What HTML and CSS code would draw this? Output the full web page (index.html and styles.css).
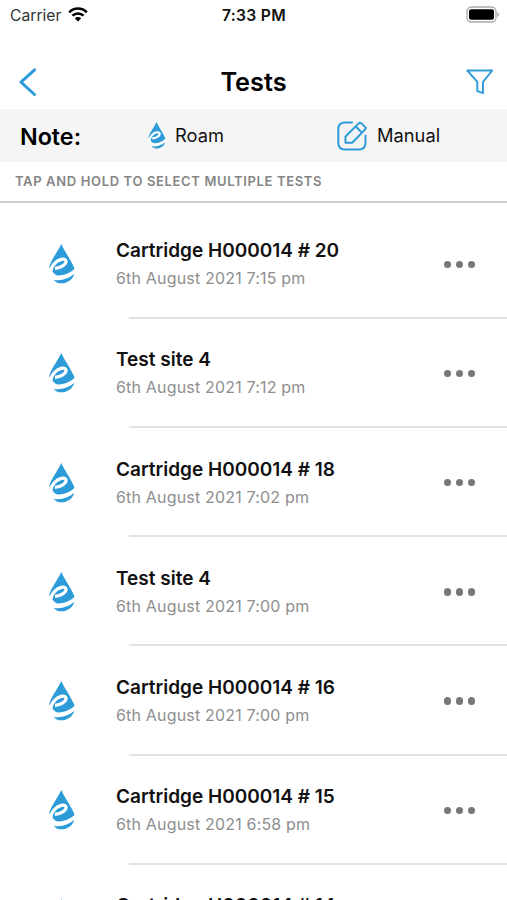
FILE: index.html
```html
<!DOCTYPE html>
<html lang="en">
<head>
  <meta charset="UTF-8" />
  <meta name="viewport" content="width=device-width, initial-scale=1.0"/>
  <title>Tests</title>
  <link rel="stylesheet" href="styles.css">
</head>
<body>
  <svg class="symbols" width="0" height="0">
    <symbol id="drop" viewBox="0 0 78 120">
      <path class="blue" d="M37 0 C45 20 64 44 76 72 C78 84 54 102 30 101 L8 82 L1 70 C4 50 26 24 37 0 Z"/>
      <path class="swirl" d="M18 73 C34 73 53 61 51 51 C47 41 29 46 17 58 C1 76 1 97 26 99 C46 100 64 92 82 77"/>
      <path class="blue" d="M14 107 C34 112 58 105 76 90 C71 107 55 118 37 118 C27 118 19 114 14 107 Z"/>
    </symbol>
  </svg>

  <div class="status-bar">
    <div class="carrier">
      <span>Carrier</span>
      <svg class="wifi" viewBox="0 0 20 15">
        <path d="M1.2 5.3 C6.2 .3 13.8 .3 18.8 5.3"/>
        <path d="M4.4 8.7 C7.6 5.6 12.4 5.6 15.6 8.7"/>
        <path class="dot" d="M6.8 11.2 C8.6 9.5 11.4 9.5 13.2 11.2 L10 14.4 Z"/>
      </svg>
    </div>
    <span class="time">7:33 PM</span>
    <svg class="battery" viewBox="0 0 34 17">
      <rect class="case" x="1" y="1" width="29" height="15" rx="4.5"/>
      <rect x="3" y="3.3" width="25" height="10.4" rx="2"/>
      <path class="cap" d="M31.3 6 Q33 6.5 33 8.5 Q33 10.5 31.3 11 Z"/>
    </svg>
  </div>

  <div class="header">
    <svg class="back" viewBox="0 0 18 28"><path d="M15.5 1.8 L2 14.2 L15.5 26.5"/></svg>
    <h1>Tests</h1>
    <svg class="filter" viewBox="0 0 28 26"><path d="M1.3 1.5 H26.3 L17 12.8 V24.2 L11.3 22 V12.8 Z"/></svg>
  </div>

  <div class="note">
    <span class="note-label">Note:</span>
    <div class="legend roam">
      <svg class="drop-small"><use href="#drop"/></svg>
      <span>Roam</span>
    </div>
    <div class="legend manual">
      <svg class="edit" viewBox="0 0 30 30">
        <path d="M15 1.5 H8 Q1.3 1.5 1.3 8 V21.5 Q1.3 28.5 8 28.5 H21.5 Q28.5 28.5 28.5 21.5 V14.5"/>
        <path d="M8.5 21.8 V15.5 L21.7 2.4 Q23 1 24.5 2.4 L28 5.9 Q29.3 7.2 28 8.6 L15.2 21.8 Z M18.8 5.5 L25 11.7"/>
      </svg>
      <span>Manual</span>
    </div>
  </div>

  <div class="hint">TAP AND HOLD TO SELECT MULTIPLE TESTS</div>

  <div class="list">
    <div class="test">
      <svg class="drop"><use href="#drop"/></svg>
      <div class="info"><div class="name">Cartridge H000014 # 20</div><div class="date">6th August 2021 7:15 pm</div></div>
      <div class="more"><i></i><i></i><i></i></div>
    </div>
    <div class="test">
      <svg class="drop"><use href="#drop"/></svg>
      <div class="info"><div class="name">Test site 4</div><div class="date">6th August 2021 7:12 pm</div></div>
      <div class="more"><i></i><i></i><i></i></div>
    </div>
    <div class="test">
      <svg class="drop"><use href="#drop"/></svg>
      <div class="info"><div class="name">Cartridge H000014 # 18</div><div class="date">6th August 2021 7:02 pm</div></div>
      <div class="more"><i></i><i></i><i></i></div>
    </div>
    <div class="test">
      <svg class="drop"><use href="#drop"/></svg>
      <div class="info"><div class="name">Test site 4</div><div class="date">6th August 2021 7:00 pm</div></div>
      <div class="more"><i></i><i></i><i></i></div>
    </div>
    <div class="test">
      <svg class="drop"><use href="#drop"/></svg>
      <div class="info"><div class="name">Cartridge H000014 # 16</div><div class="date">6th August 2021 7:00 pm</div></div>
      <div class="more"><i></i><i></i><i></i></div>
    </div>
    <div class="test">
      <svg class="drop"><use href="#drop"/></svg>
      <div class="info"><div class="name">Cartridge H000014 # 15</div><div class="date">6th August 2021 6:58 pm</div></div>
      <div class="more"><i></i><i></i><i></i></div>
    </div>
    <div class="test">
      <svg class="drop"><use href="#drop"/></svg>
      <div class="info"><div class="name">Cartridge H000014 # 14</div><div class="date"></div></div>
    </div>
  </div>
</body>
</html>
```

FILE: styles.css
```css
* {
  box-sizing: border-box;
}

body {
  margin: 0;
  height: 900px;
  overflow: hidden;
  display: flex;
  flex-direction: column;
  background-color: #fff;
  color: #111;
  font-family: Inter, sans-serif;
}

svg {
  display: block;
  fill: none;
}

.symbols {
  height: 0;
  flex: none;
}

.blue {
  fill: #2d9bd8;
}

.swirl {
  stroke: #fff;
  stroke-width: 9.5;
}

.status-bar {
  display: grid;
  grid-template-columns: 1fr auto 1fr;
  align-items: center;
  height: 30px;
  flex: none;
  padding: 0 7px 0 10px;
  font-size: 15.7px;
}

.carrier {
  display: flex;
  align-items: center;
  gap: 7px;
  color: #333;
}

.wifi {
  width: 20px;
  height: 15px;
  margin-top: -2px;
  stroke: #000;
  stroke-width: 2.5;
}

.wifi .dot {
  fill: #000;
  stroke: none;
}

.time {
  margin-right: 2px;
  font-weight: 600;
  letter-spacing: 0.3px;
}

.battery {
  width: 34px;
  height: 17px;
  margin-top: -2px;
  justify-self: end;
  fill: #000;
}

.battery .case {
  fill: #fff;
  stroke: #aaa;
  stroke-width: 1.3;
}

.battery .cap {
  fill: #aaa;
}

.header {
  display: grid;
  grid-template-columns: 1fr auto 1fr;
  align-items: center;
  height: 79px;
  flex: none;
  padding: 24px 13px 0 19px;
}

h1 {
  margin: 0 6px 0 0;
  font-size: 25.3px;
  font-weight: 600;
  color: #000;
}

.back {
  width: 18px;
  height: 28px;
  stroke: #2d9bd8;
  stroke-width: 3;
  stroke-linecap: round;
  stroke-linejoin: round;
}

.filter {
  width: 28px;
  height: 26px;
  justify-self: end;
  stroke: #2d9bd8;
  stroke-width: 1.9;
  stroke-linejoin: round;
}

.note {
  display: flex;
  align-items: center;
  height: 53px;
  flex: none;
  padding-left: 20px;
  background-color: #f5f5f5;
}

.note-label {
  width: 128px;
  padding-top: 1px;
  font-size: 23.3px;
  font-weight: 600;
  color: #000;
}

.legend {
  display: flex;
  align-items: center;
  font-size: 18.3px;
}

.legend span {
  padding-bottom: 2px;
}

.roam {
  width: 189px;
  gap: 9px;
}

.manual {
  gap: 10px;
}

.drop-small {
  width: 18px;
  height: 27px;
}

.drop-small .swirl {
  stroke: #f5f5f5;
}

.edit {
  width: 30px;
  height: 30px;
  stroke: #2d9bd8;
  stroke-width: 2;
  stroke-linecap: round;
  stroke-linejoin: round;
}

.hint {
  height: 41px;
  flex: none;
  padding-left: 15px;
  line-height: 39px;
  font-size: 13px;
  font-weight: 600;
  letter-spacing: 0.64px;
  color: #858585;
  border-bottom: 2px solid #d0d0d0;
}

.list {
  padding-top: 6.7px;
}

.test {
  display: flex;
  align-items: center;
  height: 109.2px;
  padding: 0 32px 0 49px;
  background: linear-gradient(#e2e2e2, #e2e2e2) no-repeat 129px 100% / 100% 2px;
}

.drop {
  width: 26px;
  height: 40px;
}

.info {
  flex: 1;
  margin-left: 41px;
}

.name {
  padding-top: 1px;
  font-size: 19px;
  line-height: 28px;
  font-weight: 600;
}

.date {
  height: 27px;
  font-size: 16px;
  line-height: 26px;
  letter-spacing: 0.18px;
  color: #8e8e8e;
}

.more {
  display: flex;
  gap: 4.6px;
}

.more i {
  width: 7.4px;
  height: 7.4px;
  border-radius: 50%;
  background-color: #777;
}
```
